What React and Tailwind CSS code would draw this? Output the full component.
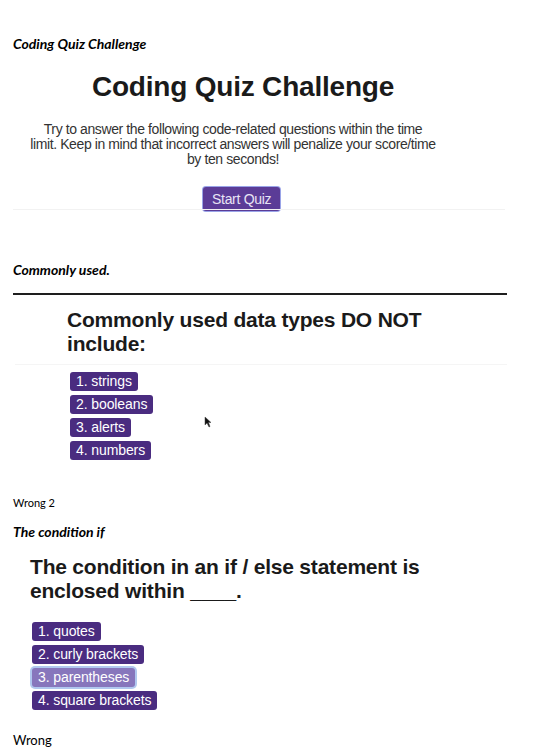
import React from 'react';

const caption = "font-['Lato',sans-serif] text-[14px] font-bold italic text-black leading-[17px]";
const quizFont = "font-['Liberation_Sans',Arial,sans-serif]";

const Choice = ({ label, active }) => (
  <div
    className={`w-fit rounded-[3px] px-[6px] h-[19px] flex items-center text-[14px] text-white tracking-[-0.1px] ${quizFont} ${
      active
        ? 'bg-[#7b68b5] ring-2 ring-[#a9c3ee] opacity-90'
        : 'bg-[#4a2c80]'
    }`}
  >
    {label}
  </div>
);

const Cursor = () => (
  <svg width="8" height="12" viewBox="0 0 8 12" className="absolute left-[134px] top-[44px]">
    <path d="M1 1 L1 9 L3 7 L5 11 L6 10.5 L4.5 6.5 L7 6.5 Z" fill="#111" stroke="#444" strokeWidth="0.5" />
  </svg>
);

export default function App() {
  const firstChoices = ['1. strings', '2. booleans', '3. alerts', '4. numbers'];
  const secondChoices = ['1. quotes', '2. curly brackets', '3. parentheses', '4. square brackets'];

  return (
    <div className="w-[550px] h-[752px] bg-white overflow-hidden pl-[13px] pt-[35px]">
      <p className={caption}>Coding Quiz Challenge</p>

      {/* intro screen */}
      <div className={`w-[492px] ${quizFont} text-[#1a1a1a]`}>
        <h1 className="mt-[19px] ml-[60px] w-[340px] text-center text-[28px] font-bold leading-[32px] tracking-[-0.2px]">
          Coding Quiz Challenge
        </h1>
        <p className="mt-[19px] ml-[0px] w-[440px] text-center text-[14px] leading-[15px] text-[#333] tracking-[-0.4px]">
          Try to answer the following code-related questions within the time
          <br />
          limit. Keep in mind that incorrect answers will penalize your score/time
          <br />
          by ten seconds!
        </p>
        <div className="mt-[20px] ml-[190px] w-fit rounded-[3px] bg-[#5b3c97] ring-1 ring-[#9aa4e8] px-[9px] h-[24px] flex items-center text-[14px] text-[#e8e4f5] tracking-[-0.3px]">
          Start Quiz
        </div>
        <div className="mt-[-2px] h-px bg-[#f2f2f2]" />
      </div>

      <p className={`${caption} mt-[51px]`}>Commonly used.</p>
      <div className="mt-[15px] w-[494px] h-[2px] bg-[#1e1e1e]" />

      {/* question 1 */}
      <div className={`${quizFont} text-[#1a1a1a]`}>
        <h2 className="mt-[13px] ml-[54px] w-[380px] text-[21px] font-bold leading-[24px] tracking-[-0.2px]">
          Commonly used data types DO NOT include:
        </h2>
        <div className="mt-[8px] ml-[2px] w-[492px] h-px bg-[#f5f5f5]" />
        <div className="relative mt-[7px] ml-[57px] flex flex-col gap-[4px]">
          {firstChoices.map((c) => (
            <Choice key={c} label={c} />
          ))}
          <Cursor />
        </div>
      </div>

      <p className="font-['Lato',sans-serif] text-[11px] leading-[14px] text-black mt-[36px]">Wrong 2</p>
      <p className={`${caption} mt-[13px]`}>The condition if</p>

      {/* question 2 */}
      <div className={`${quizFont} text-[#1a1a1a]`}>
        <h2 className="mt-[15px] ml-[17px] w-[410px] text-[21px] font-bold leading-[24px] tracking-[-0.2px]">
          The condition in an if / else statement is enclosed within ____.
        </h2>
        <div className="mt-[19px] ml-[19px] flex flex-col gap-[4px]">
          {secondChoices.map((c, i) => (
            <Choice key={c} label={c} active={i === 2} />
          ))}
        </div>
      </div>

      <p className="font-['Lato',sans-serif] text-[13px] leading-[16px] text-black mt-[22px]">Wrong</p>
    </div>
  );
}
